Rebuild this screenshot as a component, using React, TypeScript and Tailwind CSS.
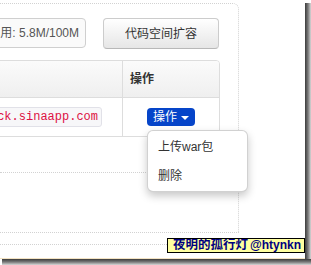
import React from "react";

const font = { fontFamily: '"Liberation Sans", "Noto Sans CJK SC", sans-serif' };

export default function App() {
  return (
    <div className="w-[311px] h-[265px] bg-white flex flex-col overflow-hidden" style={font}>
      <div className="flex h-[259px]">
        <div className="relative w-[305px] h-[259px] bg-white overflow-hidden border-b border-[#f3e3c3]">
          <div className="mt-[3px] w-[239px] h-[230px] border-t border-r border-b border-dotted border-[#d2d2d2] rounded-tr-[6px]">
            <div className="pt-[14px] flex items-start">
              <div className="ml-[-40px] w-[126px] h-[30px] flex items-center justify-end pr-[6px] rounded-[4px] border border-[#cfcfcf] bg-[#fafafa] text-[12px] leading-[14px] text-[#555] whitespace-nowrap">
                已用: 5.8M/100M
              </div>
              <div className="ml-[17px] w-[116px] h-[31px] flex items-center justify-center rounded-[4px] border border-[#cccccc] border-b-[#b8b8b8] bg-gradient-to-b from-white to-[#e6e6e6] text-[12px] leading-[14px] text-[#333]">
                代码空间扩容
              </div>
            </div>
            <div className="mt-[11px] ml-[-10px] w-[230px] border border-[#dddddd] rounded-tr-[4px] overflow-hidden">
              <div className="flex h-[37px] border-b border-[#dddddd] bg-gradient-to-b from-[#fbfbfb] to-[#efefef]">
                <div className="w-[132px] border-r border-[#dddddd]" />
                <div className="flex-1 flex items-center pl-[7px] text-[12px] font-bold text-[#333] leading-[14px]">操作</div>
              </div>
              <div className="flex h-[38px]">
                <div className="w-[132px] border-r border-[#dddddd] flex items-center justify-end pr-[20px]">
                  <code
                    className="h-[20px] flex items-center px-[3px] rounded-[3px] border border-[#e1e1e8] bg-[#f7f7f9] text-[12px] leading-[14px] text-[#dd1144] whitespace-nowrap"
                    style={{ fontFamily: '"Liberation Mono", monospace' }}
                  >
                    ck.sinaapp.com
                  </code>
                </div>
                <div className="flex-1 flex items-center justify-center">
                  <div className="w-[48px] h-[18px] rounded-[4px] bg-[#0645c9] flex items-center justify-center gap-[4px] text-white text-[12px] leading-[14px]">
                    <span>操作</span>
                    <span className="w-0 h-0 border-l-[4px] border-r-[4px] border-t-[4px] border-l-transparent border-r-transparent border-t-white mt-[1px]" />
                  </div>
                </div>
              </div>
            </div>
            <div className="mt-[35px] border-t border-dotted border-[#d2d2d2]" />
          </div>
          <div className="mt-[11px] w-[239px] border-t border-dotted border-[#d2d2d2]" />

          <div className="absolute left-[147px] top-[130px] w-[101px] h-[62px] bg-white rounded-[6px] border border-[rgba(0,0,0,0.18)] shadow-[0_4px_9px_rgba(0,0,0,0.22)] py-[1px] flex flex-col text-[12px] text-[#333]">
            <div className="h-[30px] flex items-center pl-[10px] leading-[14px]">上传war包</div>
            <div className="h-[30px] flex items-center pl-[10px] leading-[14px]">删除</div>
          </div>

          <div className="absolute left-[167px] top-[238px] w-[138px] h-[15px] bg-[#ffffa0] border border-black flex items-center pl-[5px] font-bold text-[#000080] whitespace-nowrap overflow-hidden">
            <span className="shrink-0 text-[12.5px] leading-[13px]">夜明的孤行灯</span>
            <span className="shrink-0 ml-[2px] text-[12px] leading-[13px]">@htynkn</span>
          </div>
        </div>
        <div className="w-[6px] flex flex-col">
          <div className="h-[3px] bg-white" />
          <div className="flex-1 bg-gradient-to-r from-[#3c3c3c] via-[#7a7a7a] to-[#d8d8d8]" />
        </div>
      </div>
      <div className="flex h-[6px]">
        <div className="w-[2px] bg-white" />
        <div className="flex-1 bg-gradient-to-b from-[#3c3c3c] via-[#7a7a7a] to-[#d8d8d8]" />
      </div>
    </div>
  );
}
